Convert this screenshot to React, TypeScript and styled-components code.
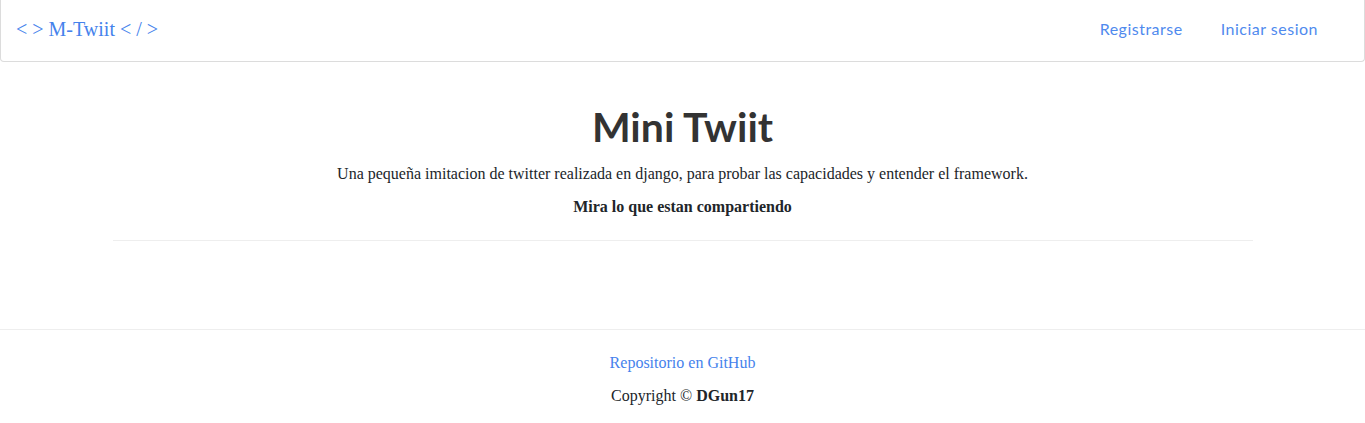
import React from 'react';
import styled, { createGlobalStyle } from 'styled-components';

const GlobalStyle = createGlobalStyle`
  html, body {
    margin: 0;
    padding: 0;
    background: #ffffff;
  }
  body {
    font-family: "Liberation Serif", "Times New Roman", serif;
    font-size: 16px;
    line-height: 1.5;
    color: #212529;
  }
  a {
    text-decoration: none;
  }
`;

const Navbar = styled.nav`
  display: flex;
  align-items: center;
  justify-content: space-between;
  height: 62px;
  box-sizing: border-box;
  padding: 0 46px 0 15px;
  background: #ffffff;
  border: 1px solid #dcdcdc;
  border-top: none;
  border-radius: 0 0 4px 4px;
`;

const Brand = styled.a`
  font-family: "Liberation Serif", "Times New Roman", serif;
  font-size: 20px;
  color: #4582ec;
  padding-bottom: 4px;
`;

const NavLinks = styled.div`
  display: flex;
  gap: 38px;
  padding-bottom: 4px;
`;

const NavLink = styled.a`
  font-family: Lato, "Open Sans", sans-serif;
  font-size: 16px;
  letter-spacing: 0.5px;
  color: #4f8aee;
`;

const Main = styled.main`
  width: 1140px;
  margin: 0 auto;
  padding-top: 40px;
  text-align: center;
`;

const Title = styled.h1`
  margin: 0 0 11px;
  font-family: Lato, "Open Sans", sans-serif;
  font-weight: 700;
  font-size: 41px;
  line-height: 1.2;
  color: #333333;
`;

const Lead = styled.p`
  margin: 0 0 9px;
`;

const Subtitle = styled.p`
  margin: 0;
  font-weight: 700;
`;

const Divider = styled.hr`
  margin: 21px 0 0;
  border: 0;
  border-top: 1px solid #eeeeee;
`;

const Footer = styled.footer`
  margin-top: 88px;
  border-top: 1px solid #eeeeee;
  padding-top: 21px;
  text-align: center;
`;

const FooterLink = styled.a`
  display: block;
  color: #4582ec;
  margin-bottom: 9px;
`;

const Copyright = styled.p`
  margin: 0;
`;

export default function App() {
  return (
    <>
      <GlobalStyle />
      <Navbar>
        <Brand href="#">&lt; &gt; M-Twiit &lt; / &gt;</Brand>
        <NavLinks>
          <NavLink href="#">Registrarse</NavLink>
          <NavLink href="#">Iniciar sesion</NavLink>
        </NavLinks>
      </Navbar>
      <Main>
        <Title>Mini Twiit</Title>
        <Lead>
          Una pequeña imitacion de twitter realizada en django, para probar las capacidades y entender el framework.
        </Lead>
        <Subtitle>Mira lo que estan compartiendo</Subtitle>
        <Divider />
      </Main>
      <Footer>
        <FooterLink href="#">Repositorio en GitHub</FooterLink>
        <Copyright>
          Copyright © <b>DGun17</b>
        </Copyright>
      </Footer>
    </>
  );
}
